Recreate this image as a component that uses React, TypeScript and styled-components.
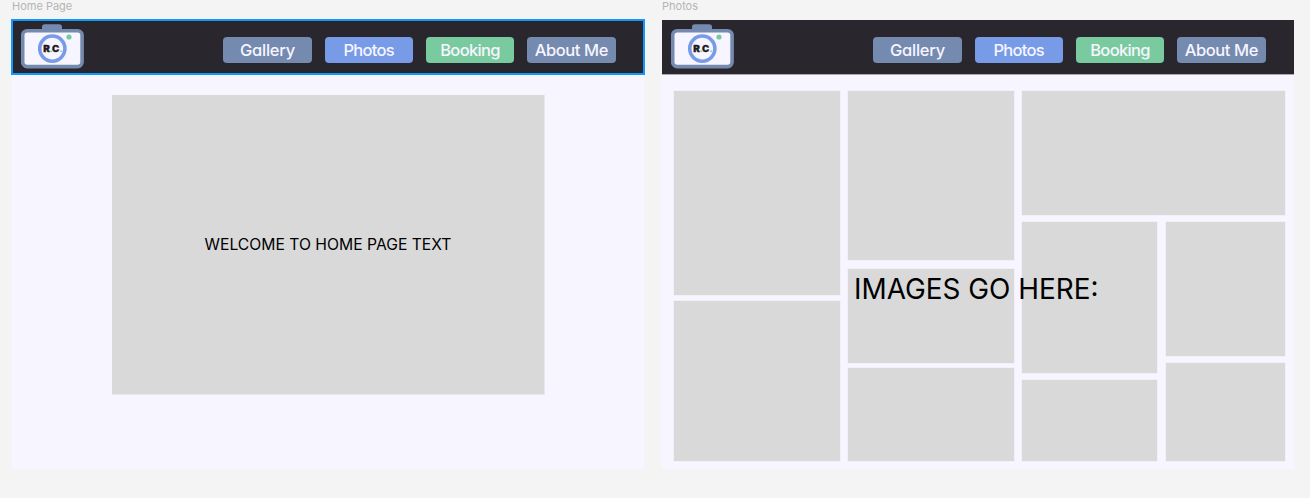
import React from "react";
import styled, { createGlobalStyle } from "styled-components";

const GlobalStyle = createGlobalStyle`
  *, *::before, *::after { box-sizing: border-box; }
  body { margin: 0; background: #f4f4f4; font-family: Inter, sans-serif; overflow: hidden; }
`;

const Canvas = styled.main`
  display: flex;
  gap: 18px;
  height: 498px;
  padding-left: 12px;
  background: #f4f4f4;
`;

const Artboard = styled.section`
  width: 632px;
`;

const FrameLabel = styled.div`
  height: 20px;
  font-size: 11px;
  line-height: 13px;
  color: #b5b5b5;
`;

const Frame = styled.div`
  height: 449px;
  background: #f7f5ff;
`;

const Header = styled.header<{ $selected?: boolean }>`
  position: relative;
  display: flex;
  align-items: flex-start;
  justify-content: space-between;
  height: 54px;
  padding: 4px 28.5px 0 9px;
  background: #29262d;
  box-shadow: ${(p) => (p.$selected ? "none" : "0 1px 0 #aaa8af")};

  &::after {
    content: "";
    display: ${(p) => (p.$selected ? "block" : "none")};
    position: absolute;
    inset: -1px;
    border: 2px solid #0d99ff;
  }
`;

const Nav = styled.nav`
  display: flex;
  gap: 13px;
  padding-top: 12.6px;
`;

const NavButton = styled.a<{ $color: string; $spacing: number }>`
  display: flex;
  align-items: center;
  justify-content: center;
  width: 88.3px;
  height: 26.4px;
  border-radius: 4px;
  background: ${(p) => p.$color};
  color: #f7f5ff;
  font-size: 16.5px;
  font-weight: 500;
  line-height: 26px;
  letter-spacing: ${(p) => p.$spacing}px;
  font-feature-settings: "cv11" 1;
  white-space: nowrap;
`;

const LogoSvg = styled.svg`
  display: block;
  width: 64px;
  height: 46px;
`;

const HomeBody = styled.div`
  padding: 21px 0 0 100px;
`;

const Hero = styled.div`
  display: flex;
  align-items: center;
  justify-content: center;
  width: 432px;
  height: 299px;
  background: #d9d9d9;
  box-shadow: 0.5px 0.5px 0 0.5px #e8e7ec;
  color: #000;
  font-size: 15.7px;
  line-height: 20px;
  white-space: nowrap;
`;

const Gallery = styled.div`
  position: relative;
  display: flex;
  gap: 8px;
  padding: 17px 0 0 12px;
`;

const Column = styled.div<{ $width: number }>`
  display: flex;
  flex-direction: column;
  width: ${(p) => p.$width}px;
`;

const Split = styled.div`
  display: flex;
  gap: 9px;
  margin-top: 7px;
`;

const Tile = styled.div<{ $height: number; $gap?: number }>`
  height: ${(p) => p.$height}px;
  margin-top: ${(p) => p.$gap ?? 0}px;
  background: #d9d9d9;
  box-shadow: 0 0 0 0.5px #ebe9f0;
`;

const GalleryTitle = styled.div`
  position: absolute;
  left: 192px;
  top: 196px;
  color: #000;
  font-size: 27.9px;
  line-height: 38px;
  white-space: nowrap;
`;

const Logo = () => (
  <LogoSvg viewBox="21 24 64 46" aria-label="R.C.">
    <path d="M42 30V27Q42 24.2 44.8 24.2H59.2Q62 24.2 62 27V30Z" fill="#748aaf" />
    <rect x="22.7" y="30.8" width="59.4" height="35.8" rx="4.5" fill="#f7f5ff" stroke="#748aaf" strokeWidth="3.6" />
    <circle cx="52.3" cy="48.6" r="12.6" fill="#f7f5ff" stroke="#789be8" strokeWidth="3.6" />
    <circle cx="69" cy="37" r="2.6" fill="#79cb9f" />
    <g fontFamily="Inter, sans-serif" fontWeight="900" fontSize="9" fill="#1e1b22" stroke="#1e1b22" strokeWidth="0.3">
      <text x="43.2" y="52" textLength="6.6" lengthAdjust="spacingAndGlyphs">R</text>
      <text x="52" y="52" textLength="7.2" lengthAdjust="spacingAndGlyphs">C</text>
    </g>
    <g fontFamily="Inter, sans-serif" fontWeight="900" fontSize="8" fill="#5fc48e">
      <text x="49.4" y="52">.</text>
      <text x="59.4" y="52">.</text>
    </g>
  </LogoSvg>
);

const links = [
  { label: "Gallery", color: "#748aaf", spacing: -0.25 },
  { label: "Photos", color: "#789be8", spacing: -0.7 },
  { label: "Booking", color: "#79cb9f", spacing: -0.65 },
  { label: "About Me", color: "#748aaf", spacing: -0.4 },
];

const SiteHeader = ({ selected }: { selected?: boolean }) => (
  <Header $selected={selected}>
    <Logo />
    <Nav>
      {links.map((link) => (
        <NavButton key={link.label} $color={link.color} $spacing={link.spacing}>
          {link.label}
        </NavButton>
      ))}
    </Nav>
  </Header>
);

export default function App() {
  return (
    <>
      <GlobalStyle />
      <Canvas>
        <Artboard>
          <FrameLabel>Home Page</FrameLabel>
          <Frame>
            <SiteHeader selected />
            <HomeBody>
              <Hero>WELCOME TO HOME PAGE TEXT</Hero>
            </HomeBody>
          </Frame>
        </Artboard>
        <Artboard>
          <FrameLabel>Photos</FrameLabel>
          <Frame>
            <SiteHeader />
            <Gallery>
              <Column $width={166}>
                <Tile $height={204} />
                <Tile $height={160} $gap={6} />
              </Column>
              <Column $width={166}>
                <Tile $height={169} />
                <Tile $height={94} $gap={9} />
                <Tile $height={93} $gap={5} />
              </Column>
              <Column $width={263}>
                <Tile $height={124} />
                <Split>
                  <Column $width={135}>
                    <Tile $height={151} />
                    <Tile $height={81} $gap={7} />
                  </Column>
                  <Column $width={119}>
                    <Tile $height={134} />
                    <Tile $height={98} $gap={7} />
                  </Column>
                </Split>
              </Column>
              <GalleryTitle>IMAGES GO HERE:</GalleryTitle>
            </Gallery>
          </Frame>
        </Artboard>
      </Canvas>
    </>
  );
}
